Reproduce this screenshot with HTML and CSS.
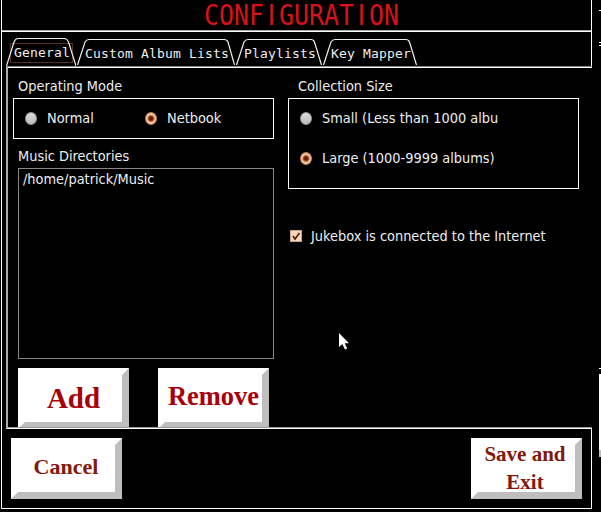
FILE: index.html
```
<!DOCTYPE html>
<html lang="en">
<head>
<meta charset="utf-8">
<title>Configuration</title>
<link rel="stylesheet" href="styles.css">
</head>
<body>
<div class="screen">
<main class="window">
  <header class="title"><h1>CONF<span>I</span>GURAT<span>I</span>ON</h1></header>
  <nav class="tabs">
    <a class="tab tab-general"><svg viewBox="0 0 70 28"><path d="M.5 28 8 4Q9.500.5 12 .5H58Q61 .5 62.500 4L70 28"/></svg><span class="focus">General</span></a>
    <a class="tab tab-custom"><svg viewBox="0 0 158 28"><path d="M.5 27 8 4Q9.500 1.500 12 1.500H147Q150 1.500 151 4L157.500 27"/></svg><span>Custom Album Lists</span></a>
    <a class="tab tab-playlists"><svg viewBox="0 0 86 28"><path d="M.5 27 8 4Q9.500 1.500 12 1.500H75Q77.500 1.500 78.500 4L85.500 27"/></svg><span>Playlists</span></a>
    <a class="tab tab-keys"><svg viewBox="0 0 94 28"><path d="M.5 27 8 4Q9.500 1.500 12 1.500H83Q85.500 1.500 86.500 4L93.500 27"/></svg><span>Key Mapper</span></a>
  </nav>
  <section class="panel">
    <div class="left">
      <h2>Operating Mode</h2>
      <div class="box modes">
        <label><i class="radio"></i>Normal</label>
        <label><i class="radio on"></i>Netbook</label>
      </div>
      <h2 class="dirs-title">Music Directories</h2>
      <div class="list">/home/patrick/Music</div>
      <div class="actions">
        <button class="add">Add</button>
        <button class="remove">Remove</button>
      </div>
    </div>
    <div class="right">
      <h2>Collection Size</h2>
      <div class="box sizes">
        <label><i class="radio"></i>Small (Less than 1000 albu</label>
        <label><i class="radio on"></i>Large (1000-9999 albums)</label>
      </div>
      <label class="internet"><svg class="check" viewBox="0 0 12 12"><rect x=".5" y=".5" width="11" height="11" fill="#fbd5b8" stroke="#c0a593"/><path d="M3 6 5 9 9.500 3" fill="none" stroke="#5c1d08" stroke-width="1.700"/></svg>Jukebox is connected to the Internet</label>
    </div>
  </section>
  <footer class="footer">
    <button>Cancel</button>
    <button class="save"><span>Save and Exit</span></button>
  </footer>
</main>
<div class="edge"></div>
</div>
<svg class="cursor" viewBox="0 0 10 17"><path d="M0 0V14L3.300 11 6 16.500 8.200 15.500 5.700 10.300H10Z" fill="#fff"/></svg>
</body>
</html>
```
FILE: styles.css
```
* { box-sizing: border-box; }
body {
  margin: 0;
  width: 601px;
  height: 512px;
  overflow: hidden;
  position: relative;
  background: #000;
  color: #eee;
  font: 14.4px/18px "DejaVu Sans Condensed", "DejaVu Sans", sans-serif;
}
h1, h2 { margin: 0; font-weight: normal; }
.screen { display: flex; justify-content: space-between; }
.window {
  width: 591px;
  height: 509px;
  margin-left: 1px;
  border-left: 1px solid #fff;
  border-bottom: 1px solid #fff;
  display: flex;
  flex-direction: column;
}
.title {
  height: 32px;
  flex: none;
  border-right: 1px solid #fff;
  border-bottom: 1px solid #fff;
  box-shadow: inset 0 -1px #aaa;
}
.title h1 {
  font: 28px/31px "DejaVu Sans Mono", monospace;
  color: #dc1018;
  width: 224px;
  height: 30px;
  white-space: nowrap;
  margin-left: 202px;
  transform: scaleX(.89);
  transform-origin: left;
}
.title span {
  display: inline-block;
  width: .602em;
  text-align: center;
  font-family: "DejaVu Sans", sans-serif;
}
.tabs {
  height: 34px;
  flex: none;
  border-right: 1px solid #fff;
  padding: 6px 0 0 4px;
  display: flex;
  gap: 1px;
  font: 13px/16px "DejaVu Sans Mono", monospace;
  letter-spacing: .174px;
}
.tab { position: relative; height: 28px; white-space: pre; padding: 8px 0 0 8px; }
.tab svg { position: absolute; left: 0; top: 0; width: 100%; height: 28px; }
.tab path { fill: none; stroke: #eee; stroke-width: 1.2; }
.tab-general { width: 70px; padding-top: 7px; }
.tab-custom { width: 158px; }
.tab-playlists { width: 86px; }
.tab-keys { width: 94px; }
.focus { display: block; width: 63px; height: 20px; margin: -2px 0 0 -4px; padding: 1px 0 0 3px; border: 1px solid #56301f; }
.panel {
  height: 363px;
  flex: none;
  margin-left: 4px;
  border-top: 1px solid #888;
  border-bottom: 1px solid #fff;
  border-left: 2px solid #aaa;
  box-shadow: inset 0 1px #fff, inset 0 -1px #999;
  display: flex;
}
.left { width: 266px; padding: 11px 0 0 5px; }
.right { width: 305px; margin-left: 14px; padding-top: 11px; }
h2 { font-size: inherit; line-height: 16px; height: 20px; padding-left: 5px; }
.right h2 { padding-left: 10px; }
.box { border: 1px solid #fff; }
.box label, .internet { display: flex; align-items: center; white-space: nowrap; }
.modes { width: 261px; height: 41px; display: flex; padding-left: 11px; }
.modes label { width: 120px; height: 38px; }
.radio {
  width: 12px;
  height: 13px;
  margin-right: 10px;
  border-radius: 50%;
  background: linear-gradient(#ddd, #bbb);
  border: 1px solid #999;
}
.radio.on { background: radial-gradient(circle, #5b1c08 0 1.5px, #bd6d3c 3px, #f6c49b 4px); border-color: #b68769; }
.dirs-title { margin-top: 9px; height: 20px; }
.list { width: 256px; height: 191px; margin: 0 0 0 5px; border: 1px solid #888; padding: 1px 4px; }
.actions { display: flex; gap: 29px; margin: 9px 0 0 5px; height: 59px; overflow: hidden; }
.sizes { width: 291px; height: 91px; padding-left: 11px; }
.sizes label { height: 42px; }
.sizes label:first-child { height: 38px; }
.internet { margin: 38px 0 0 2px; }
.check { width: 12px; height: 12px; margin-right: 9px; }
button {
  width: 111px;
  height: 61px;
  flex: none;
  padding: 0 1px 3px 0;
  border: 7px solid;
  border-color: #fff #bebebe #bebebe #fff;
  background: #fff;
  color: #84180b;
  font: bold 22px/28px "Liberation Serif", serif;
}
.actions button { color: #a80008; }
.actions .add { font-size: 29px; padding: 0 0 2px; }
.actions .remove { font-size: 26.500px; white-space: nowrap; padding: 0 0 5px; }
.footer .save { font-size: 21px; padding: 0 3px 0 0; line-height: 28px; }
.save span { display: block; margin: -5px 0 -4px; }
.footer { flex: 1; border-right: 1px solid #fff; display: flex; justify-content: space-between; padding: 9px 9px 0 9px; }
.edge {
  width: 2px;
  height: 512px;
  background: linear-gradient(#000 10px, #fff 10px 11px, #000 11px 42px, #fff 42px 43px, #000 43px 45px, #fff 45px 46px, #000 46px 368px, #fff 368px 369px, #000 369px 374px, #fff 374px 450px, #bebebe 450px 457px, #000 457px);
}
.cursor { position: absolute; left: 339px; top: 333px; width: 10px; height: 17px; }
```
